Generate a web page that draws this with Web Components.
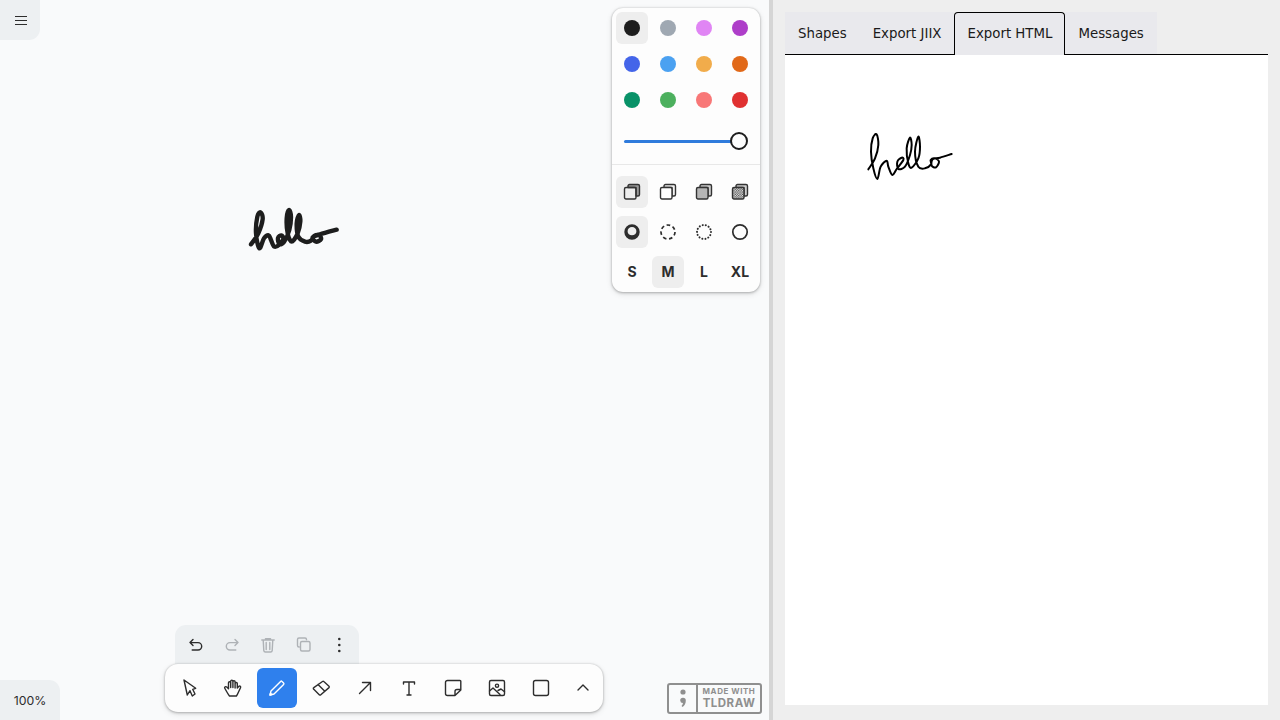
<!DOCTYPE html>
<html>
<head>
<meta charset="utf-8">
<title>hello</title>
<style>
  html, body { margin: 0; height: 100%; overflow: hidden; }
  body { font-family: "Inter", "Liberation Sans", sans-serif; }
</style>
</head>
<body>
<demo-app>
  <draw-canvas slot="left"></draw-canvas>
  <export-panel slot="right"></export-panel>
</demo-app>

<script>
// every element is just a shadow root with a fixed template
function define(name, html) {
  customElements.define(name, class extends HTMLElement {
    constructor() {
      super();
      this.attachShadow({ mode: 'open' }).innerHTML = typeof html === 'function' ? html(this) : html;
    }
  });
}

const svg = (size, body, w) => `<svg width="${size}" height="${size}" viewBox="0 0 ${size} ${size}" fill="none" stroke="currentColor" stroke-width="${w || 1.4}" stroke-linecap="round" stroke-linejoin="round">${body}</svg>`;

const ICONS = {
  undo: svg(18, '<path d="M6 3.400 3 6.600l3 3M3 6.600h8a3.700 3.700 0 0 1 0 7.400H5.200"/>'),
  redo: svg(18, '<path d="M12 3.400l3 3.200-3 3M15 6.600H7a3.700 3.700 0 0 0 0 7.400h5.800"/>'),
  trash: svg(18, '<path d="M2.800 4h12.400M6.500 4V2.600h5V4M4.200 4l.6 10.600a1.600 1.600 0 0 0 1.600 1.400h5.200a1.600 1.600 0 0 0 1.600-1.400L13.800 4M7.200 6.500v7M10.800 6.500v7"/>'),
  duplicate: svg(18, '<path d="M11.500 3.800V3.500A1.500 1.500 0 0 0 10 2H4A1.500 1.500 0 0 0 2.500 3.500v6A1.500 1.500 0 0 0 4 11h.3"/><rect x="5.500" y="5.500" width="9.500" height="9.500" rx="1.500"/>'),
  more: svg(18, '<g fill="currentColor" stroke="none"><circle cx="8.300" cy="3" r="1.300"/><circle cx="8.300" cy="9" r="1.300"/><circle cx="8.300" cy="15" r="1.300"/></g>'),
  select: svg(20, '<path d="M5 2l3.300 15 2.700-4.300 2.300 5.300 2.700-2-2.300-4.700 3-1z"/>'),
  hand: svg(20, '<path d="M6.500 18C5 16.200 3 12.500 1.800 10.300c-.7-1.300.9-2.300 2-1.200L5.500 10.800V4.800c0-1.500 2.200-1.500 2.200 0V9.500 3.200c0-1.500 2.200-1.500 2.200 0V9.500 3.800c0-1.500 2.200-1.500 2.200 0V10 5.600c0-1.500 2.200-1.500 2.200 0V10l1.600-1.700c1-.8 2.200.1 1.600 1.400L15.400 14.200c-.6 1.400-1.200 2.600-2 3.800z"/>'),
  draw: svg(20, '<path d="M3 17l1-4L13.600 3.400a1 1 0 0 1 1.400 0l1.600 1.600a1 1 0 0 1 0 1.400L7 16z"/><path d="M3 17l1.800-.5-1.300-1.300z" fill="currentColor"/>'),
  eraser: svg(20, '<path d="M2.800 9.600 11.500 3.500a1 1 0 0 1 1.300.1L18 8.200a1 1 0 0 1 0 1.400L9.800 16.800a1 1 0 0 1-1.300.1L2.800 11.300a1 1 0 0 1 0-1.700zM7 6.500l6.300 6.300"/>'),
  arrow: svg(20, '<path d="M4.500 15.500 15.500 4.500M7.500 4.500h8v8"/>'),
  text: svg(20, '<path d="M4.500 6V4h11v2M10 4v13M8 17h4"/>'),
  note: svg(20, '<path d="M4.500 2.500H17a.8.8 0 0 1 .8.8V12l-5.800 5.500H4.500a2 2 0 0 1-2-2v-11a2 2 0 0 1 2-2zM17.800 11.500H14a2 2 0 0 0-2 2v4"/>'),
  image: svg(20, '<rect x="2.500" y="2.500" width="15" height="15" rx="1.500"/><circle cx="10" cy="7.700" r="1.600"/><path d="M2.500 13l3.500-3 7 6.500M11 12.500l3-1.500 3.500 2.800"/>'),
  rect: svg(20, '<rect x="2.500" y="2.500" width="15" height="15" rx="2"/>'),
  chevron: svg(20, '<path d="M5 12l5-5 5 5"/>'),
  'dash-draw': svg(18, '<path fill="currentColor" stroke="none" fill-rule="evenodd" d="M9 1.300a7.700 7.700 0 1 1 0 15.400A7.700 7.700 0 0 1 9 1.300zM9 4c-2.500 0-4.400 1.800-4.400 4.200S6.500 12.200 9 12.200s4.400-1.600 4.400-4S11.500 4 9 4z"/>'),
  'dash-dashed': svg(18, '<circle cx="9" cy="9" r="7" stroke-linecap="butt" stroke-dasharray="3.600 2.680"/>', 1.7),
  'dash-dotted': svg(18, '<circle cx="9" cy="9" r="7" stroke-dasharray="0.100 3.040"/>', 2),
  'dash-solid': svg(18, '<circle cx="9" cy="9" r="7.200"/>', 1.7)
};

// the four box-on-box fill icons only differ by what fills the front face
const fillIcon = (front, back) => `<svg width="18" height="18" viewBox="0 0 18 18" fill="none" stroke="#333" stroke-width="1.400" stroke-linejoin="round">
  <defs><pattern id="dots" width="2.400" height="2.400" patternUnits="userSpaceOnUse"><rect width="2.400" height="2.400" fill="#f4f4f4" stroke="none"/><rect width="1.200" height="1.200" fill="#444" stroke="none"/><rect x="1.200" y="1.200" width="1.200" height="1.200" fill="#444" stroke="none"/></pattern></defs>
  <path d="M5 4.500V3a1.500 1.500 0 0 1 1.500-1.500h8.500A1.500 1.500 0 0 1 16.500 3v8.500A1.500 1.500 0 0 1 15 13h-2V4.500z" fill="${back}"/>
  <rect x="1.500" y="4.500" width="11.500" height="11.500" rx="1.500" fill="${front}"/></svg>`;
ICONS['fill-none'] = fillIcon('none', '#9a9a9a');
ICONS['fill-semi'] = fillIcon('#fff', '#f2f2f2');
ICONS['fill-solid'] = fillIcon('#b5b5b5', '#d0d0d0');
ICONS['fill-pattern'] = fillIcon('url(#dots)', '#cfcfcf');

// smooth line through traced points
function smooth(pts) {
  let d = `M${pts[0][0]} ${pts[0][1]}`;
  for (let i = 0; i < pts.length - 1; i++) {
    const p0 = pts[i - 1] || pts[i], p1 = pts[i], p2 = pts[i + 1], p3 = pts[i + 2] || p2;
    const c1x = p1[0] + (p2[0] - p0[0]) / 6, c1y = p1[1] + (p2[1] - p0[1]) / 6;
    const c2x = p2[0] - (p3[0] - p1[0]) / 6, c2y = p2[1] - (p3[1] - p1[1]) / 6;
    d += `C${c1x.toFixed(1)} ${c1y.toFixed(1)} ${c2x.toFixed(1)} ${c2y.toFixed(1)} ${p2[0]} ${p2[1]}`;
  }
  return d;
}

// traced from the reference, coordinates are 3x the pixel offset inside the stroke box
const CANVAS_STROKE = [[33,133],[55,100],[68,58],[62,37],[52,50],[48,100],[58,145],[72,115],[86,106],[93,120],[103,140],[118,134],[130,116],[124,106],[114,114],[118,132],[132,126],[148,90],[153,50],[147,30],[140,55],[143,100],[155,125],[173,100],[181,65],[177,45],[170,70],[175,110],[195,125],[213,122],[222,108],[238,106],[243,118],[228,125],[218,112],[240,103],[290,89]];
const EXPORT_STROKE = [[25,133],[45,100],[55,60],[50,28],[38,40],[33,80],[40,130],[52,162],[62,125],[80,107],[85,125],[97,150],[110,132],[130,105],[125,98],[112,110],[115,132],[135,125],[150,90],[155,60],[150,38],[140,70],[145,115],[155,128],[175,100],[180,65],[175,35],[165,80],[175,125],[195,130],[213,118],[212,105],[225,100],[237,110],[228,127],[215,122],[218,103],[240,98],[275,87]];

define('hello-stroke', el => {
  const thin = el.hasAttribute('thin');
  const w = thin ? 100 : 110;
  const pts = thin ? EXPORT_STROKE : CANVAS_STROKE;
  return `<style>:host{display:block;line-height:0}</style>
  <svg width="${w}" height="60" viewBox="0 0 ${w * 3} 180" fill="none" stroke="${thin ? '#000' : '#1d1d1d'}" stroke-width="${thin ? 6 : 13}" stroke-linecap="round" stroke-linejoin="round"><path d="${smooth(pts)}"/></svg>`;
});

define('demo-app', `<style>
  :host{display:flex;height:720px;width:1280px}
  ::slotted([slot=left]){width:769px;flex:none}
  ::slotted([slot=right]){flex:1}
  .split{width:4px;flex:none;background:#d5d5d5}
</style><slot name="left"></slot><div class="split"></div><slot name="right"></slot>`);

define('draw-canvas', `<style>
  :host{display:flex;flex-direction:column;justify-content:space-between;position:relative;background:#f9fafb;height:720px;color:#2d2d2d}
  .top,.bottom{display:flex;justify-content:space-between}
  .top{align-items:flex-start}
  .bottom{align-items:flex-end;justify-content:flex-start}
  style-panel{margin:8px 9px 0 0}
  hello-stroke{position:absolute;left:240px;top:200px}
  tool-dock{margin:0 0 8px 105px}
  tl-watermark{margin:0 0 6px 64px}
</style>
<hello-stroke></hello-stroke>
<div class="top"><menu-button></menu-button><style-panel></style-panel></div>
<div class="bottom"><zoom-badge></zoom-badge><tool-dock></tool-dock><tl-watermark></tl-watermark></div>`);

define('menu-button', `<style>
  :host{display:flex;align-items:flex-start;width:40px;height:40px;background:#edf0f2;border-bottom-right-radius:11px}
  i{display:block;width:12px;height:7px;margin:16px 0 0 15px;border-top:1px solid #2d2d2d;border-bottom:1px solid #2d2d2d}
  i::after{content:"";display:block;height:1px;background:#2d2d2d;margin-top:3px}
</style><i></i>`);

define('zoom-badge', `<style>
  :host{display:flex;align-items:center;justify-content:center;width:60px;height:40px;background:#edf0f2;border-top-right-radius:11px;font:400 12.300px "Inter",sans-serif;color:#2d2d2d}
</style>100%`);

define('color-dot', el => `<style>
  :host{display:flex;align-items:center;justify-content:center;width:36px;height:36px}
  div{display:flex;align-items:center;justify-content:center;width:32px;height:32px;border-radius:6px}
  :host([on]) div{background:#eeeeee}
  b{display:block;width:16px;height:16px;border-radius:50%;background:${el.getAttribute('color')}}
</style><div><b></b></div>`);

define('style-button', el => `<style>
  :host{display:flex;align-items:center;justify-content:center;width:36px;height:40px;color:#2d2d2d;font:700 14px "Inter",sans-serif}
  div{display:flex;align-items:center;justify-content:center;width:32px;height:32px;border-radius:6px}
  :host([on]) div{background:#eeeeee}
  span{margin-top:-2px}
  svg{display:block}
</style><div>${ICONS[el.getAttribute('icon')] || '<span><slot></slot></span>'}</div>`);

define('style-panel', () => {
  const colors = ['#1d1d1d', '#9fa8b2', '#e085f4', '#ae3ec9', '#4465e9', '#4ba1f1', '#f1ac4b', '#e16919', '#099268', '#4cb05e', '#f87777', '#e03131'];
  const icons = ['fill-none', 'fill-semi', 'fill-solid', 'fill-pattern', 'dash-draw', 'dash-dashed', 'dash-dotted', 'dash-solid'];
  return `<style>
    :host{display:block;width:148px;box-sizing:border-box;background:#fdfdfd;border-radius:11px;box-shadow:0 0 2px rgba(0,0,0,.16),0 1px 3px rgba(0,0,0,.22),0 2px 6px rgba(0,0,0,.1)}
    .grid{display:grid;grid-template-columns:repeat(4,36px);padding:0 2px}
    .colors{padding-top:2px}
    .slider{display:flex;align-items:center;height:46px;padding:0 12px;border-bottom:1px solid #e8e8e8;margin:0}
    .track{flex:1;height:3px;background:#2f7bdc;border-radius:2px;margin-right:-2px}
    .thumb{width:14px;height:14px;border:2px solid #1d1d1d;border-radius:50%;background:#fdfdfd}
    .styles{padding-top:7px}
  </style>
  <div class="grid colors">${colors.map((c, i) => `<color-dot color="${c}"${i ? '' : ' on'}></color-dot>`).join('')}</div>
  <div class="slider"><div class="track"></div><div class="thumb"></div></div>
  <div class="grid styles">
    ${icons.map(n => `<style-button icon="${n}"${n === 'fill-none' || n === 'dash-draw' ? ' on' : ''}></style-button>`).join('')}
    <style-button>S</style-button><style-button on>M</style-button><style-button>L</style-button><style-button>XL</style-button>
  </div>`;
});

define('tool-button', el => `<style>
  :host{display:flex;align-items:center;justify-content:center;width:40px;height:40px;border-radius:6px;color:#2d2d2d}
  :host([on]){background:#2f80ed;color:#fff}
  :host([narrow]){width:36px}
  svg{display:block}
</style>${ICONS[el.getAttribute('icon')]}`);

define('action-button', el => `<style>
  :host{display:flex;align-items:center;justify-content:center;width:36px;height:39px;color:#2d2d2d}
  :host([off]){color:#aeb2b6}
  svg{display:block}
</style>${ICONS[el.getAttribute('icon')]}`);

define('tool-dock', `<style>
  :host{display:block;width:438px}
  .actions{display:flex;width:184px;box-sizing:border-box;padding:0 1px 0 3px;margin-left:10px;background:#edf0f2;border-radius:11px 11px 0 0}
  .tools{display:flex;gap:4px;box-sizing:border-box;width:438px;padding:4px 2px 4px 4px;background:#fdfdfd;border-radius:13px;box-shadow:0 0 2px rgba(0,0,0,.16),0 1px 3px rgba(0,0,0,.22),0 2px 6px rgba(0,0,0,.1)}
</style>
<div class="actions">
  <action-button icon="undo"></action-button><action-button icon="redo" off></action-button><action-button icon="trash" off></action-button><action-button icon="duplicate" off></action-button><action-button icon="more"></action-button>
</div>
<div class="tools">
  <tool-button icon="select"></tool-button><tool-button icon="hand"></tool-button><tool-button icon="draw" on></tool-button><tool-button icon="eraser"></tool-button><tool-button icon="arrow"></tool-button><tool-button icon="text"></tool-button><tool-button icon="note"></tool-button><tool-button icon="image"></tool-button><tool-button icon="rect"></tool-button><tool-button icon="chevron" narrow></tool-button>
</div>`);

define('tl-watermark', `<style>
  :host{display:flex;width:95px;height:31px;box-sizing:border-box;border:2px solid #8f8f8f;border-radius:3px;color:#8f8f8f;background:#f9fafb}
  .mark{display:flex;align-items:center;justify-content:center;width:27px;border-right:2px solid #8f8f8f;flex:none}
  .words{flex:1;display:flex;flex-direction:column;align-items:center;justify-content:center;font-family:"Inter",sans-serif;font-weight:700;line-height:1}
  .a{font-size:8px;letter-spacing:.55px;height:11px}
  .b{font-size:11.500px;letter-spacing:.5px;height:12px}
</style>
<div class="mark"><svg width="10" height="21" viewBox="0 0 10 21" fill="currentColor"><circle cx="5" cy="4" r="2.600"/><path d="M2.200 12.500a2.800 2.800 0 0 1 5.600 0c0 2.800-1 5-3.200 6.500l-1.100-.9c.9-1 1.400-1.800 1.400-3a2.800 2.800 0 0 1-2.700-2.600z"/></svg></div>
<div class="words"><span class="a">MADE WITH</span><span class="b">TLDRAW</span></div>`);

define('tab-button', `<style>
  :host{display:flex;align-items:center;height:42px;box-sizing:border-box;padding:0 13px;background:#e9e9ed;font:400 13.333px "DejaVu Sans",sans-serif;color:#1a1a1a;white-space:nowrap}
  :host([on]){border:1px solid #000;border-bottom:0;border-radius:4px 4px 0 0;padding:0 12px 1px;height:43px;margin-bottom:-1px;position:relative}
</style><slot></slot>`);

define('export-panel', `<style>
  :host{display:flex;flex-direction:column;box-sizing:border-box;background:#eeeeee;padding:12px 12px 15px;height:720px}
  .tabs{display:flex;border-bottom:1px solid #000;flex:none}
  .body{flex:1;background:#fff;padding:70px 0 0 75px}
</style>
<div class="tabs"><tab-button>Shapes</tab-button><tab-button>Export JIIX</tab-button><tab-button on>Export HTML</tab-button><tab-button>Messages</tab-button></div>
<div class="body"><hello-stroke thin></hello-stroke></div>`);
</script>
</body>
</html>
